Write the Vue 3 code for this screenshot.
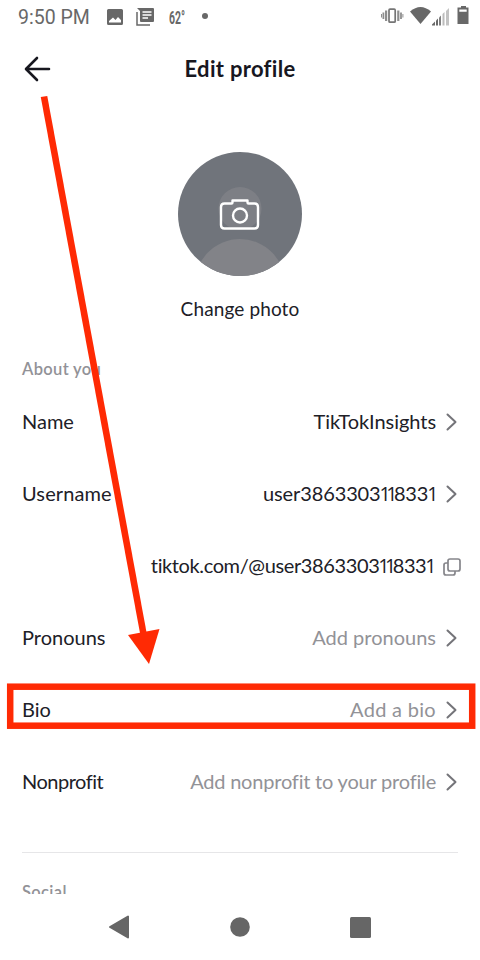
<script setup>
const rows = [
  { key: 'name', label: 'Name', value: 'TikTokInsights', icon: 'chevron' },
  { key: 'username', label: 'Username', value: 'user3863303118331', icon: 'chevron' },
  { key: 'link', label: '', value: 'tiktok.com/@user3863303118331', icon: 'copy' },
  { key: 'pronouns', label: 'Pronouns', value: 'Add pronouns', icon: 'chevron', muted: true },
  { key: 'bio', label: 'Bio', value: 'Add a bio', icon: 'chevron', muted: true },
  { key: 'nonprofit', label: 'Nonprofit', value: 'Add nonprofit to your profile', icon: 'chevron', muted: true },
]
// Narrow ones get their own run so that the digits are spaced proportionally.
const runs = (text) => text.split(/(1)/).filter(Boolean)
</script>

<template>
  <div class="screen">
    <div class="status">
      <span class="time">9:50 PM</span>
      <svg class="picture" width="16" height="16" viewBox="0 0 16 16">
        <path fill="#686868" fill-rule="evenodd" d="M1.500 0h13Q16 0 16 1.500v13Q16 16 14.500 16h-13Q0 16 0 14.500v-13Q0 0 1.500 0ZM2 13.500h12V11l-3-3-2.500 3L6 8.500 2 12Z" />
      </svg>
      <svg class="news" width="18" height="18" viewBox="0 0 18 18">
        <path fill="#686868" fill-rule="evenodd" d="M1 0h16Q18 0 18 1v12Q18 14 17 14H5Q4 14 4 13V3ZM6.500 3.300v1.500h9V3.300ZM6.500 6.300v1.500h9V6.300ZM6.500 9.300v1.500h5.500V9.300Z" />
        <path d="M1 4v13h13" fill="none" stroke="#686868" stroke-width="1.500" />
      </svg>
      <span class="temp">62°</span>
      <i class="dot"></i>
      <svg class="signals" width="90" height="22" viewBox="0 0 90 22">
        <g fill="#686868">
          <rect x="8" y="3.200" width="6.200" height="13" rx="1" fill="none" stroke="#757575" stroke-width="1.700" />
          <path d="M4 4.500h2.200v10.500H4ZM1.500 6.500h1.800v6.500H1.500ZM0 8h1v3.500H0ZM16.200 4.500h2.200v10.500h-2.200ZM19.100 6.500h1.800v6.500h-1.800ZM21.400 8h1v3.500h-1Z" opacity=".75" />
          <path d="M29 5.500Q39.500-3.500 50 5.500L39.500 18Z" />
          <path d="M51 19.500v-1l3-3v4Z" />
          <path d="M55 19.500v-5l2-2v7Z" />
          <path d="M58 19.500v-8l2-2v10Z" opacity=".85" />
          <path d="M61.500 19.500V8l2-2v13.500Z" opacity=".45" />
          <path d="M65 19.500V5l3-3v17.500Z" opacity=".4" />
          <path fill-rule="evenodd" d="M80 0h5v1.500h2.500V18h-11V1.500H80ZM78.300 3.500v2.200h7.400V3.500Z" />
        </g>
      </svg>
    </div>

    <header class="header">
      <svg class="back" width="27" height="26" viewBox="0 0 27 26">
        <path d="M13 2 2 13l11 11M2.500 13H25" fill="none" stroke="#17171f" stroke-width="2.600" stroke-linecap="round" stroke-linejoin="round" />
      </svg>
      <h1 class="title">Edit profile</h1>
    </header>

    <section class="photo">
      <svg width="124" height="124" viewBox="0 0 124 124">
        <defs>
          <clipPath id="avatar"><circle cx="62" cy="62" r="62" /></clipPath>
        </defs>
        <g clip-path="url(#avatar)">
          <rect width="124" height="124" fill="#70747b" />
          <circle cx="62" cy="56.500" r="21.500" fill="#7d7f85" />
          <circle cx="62" cy="132" r="45" fill="#828388" />
        </g>
        <g fill="none" stroke="#fff" stroke-width="2.400" stroke-linejoin="round">
          <path d="M46.500 51.500H53.500Q54.500 51.500 54.500 50.500V48.500H69.500V50.500Q69.500 51.500 70.500 51.500H76.500Q80 51.500 80 55V73Q80 76.500 76.500 76.500H46.500Q43 76.500 43 73V55Q43 51.500 46.500 51.500Z" />
          <circle cx="62" cy="63.500" r="7" />
        </g>
      </svg>
      <span class="change">Change photo</span>
    </section>

    <main class="content">
      <h2 class="section about">About you</h2>
      <div v-for="row in rows" :key="row.key" class="row" :class="row.key">
        <span class="label">{{ row.label }}</span>
        <span class="value" :class="{ muted: row.muted }"><span v-for="(run, i) in runs(row.value)" :key="i" :class="{ one: run === '1' }">{{ run }}</span></span>
        <svg v-if="row.icon === 'chevron'" class="chevron" width="11" height="18" viewBox="0 0 11 18">
          <path d="m1.500 1.500 8 7.500-8 7.500" fill="none" stroke="#747479" stroke-width="2" stroke-linecap="round" stroke-linejoin="round" />
        </svg>
        <svg v-else class="copy" width="18" height="18" viewBox="0 0 18 18">
          <rect x="5" y="1" width="12" height="12" rx="2" fill="none" stroke="#85858a" stroke-width="1.700" />
          <path d="M5 5H3Q1 5 1 7v8q0 2 2 2h7q2 0 2-2v-2" fill="none" stroke="#85858a" stroke-width="1.700" />
        </svg>
      </div>
      <hr class="divider" />
      <h2 class="section social">Social</h2>
    </main>

    <nav class="nav">
      <svg class="nav-back" width="22" height="24" viewBox="0 0 22 24"><path d="M2 12 20 1.500v21Z" fill="#666" stroke="#666" stroke-width="2" stroke-linejoin="round" /></svg>
      <svg width="20" height="20" viewBox="0 0 20 20"><circle cx="10" cy="10" r="9.800" fill="#666" /></svg>
      <svg width="21" height="21" viewBox="0 0 21 21"><rect width="21" height="21" rx="1.500" fill="#666" /></svg>
    </nav>

    <svg class="annotation" width="480" height="960" viewBox="0 0 480 960">
      <path d="M44 96.500 143.500 634" stroke="#ff2a04" stroke-width="6.600" />
      <path d="m128 635 31.500-6L149 664Z" fill="#ff2a04" />
      <rect x="10.200" y="686.700" width="462" height="39" fill="none" stroke="#ff2a04" stroke-width="6.500" />
    </svg>
  </div>
</template>

<style>
body { background: #fff; }
</style>

<style scoped>
.screen {
  position: relative;
  width: 480px;
  height: 960px;
  overflow: hidden;
  display: flex;
  flex-direction: column;
  background: #fff;
  color: #202027;
  font-family: Lato, sans-serif;
}
.status {
  height: 36px;
  box-sizing: border-box;
  padding-left: 18px;
  display: flex;
  align-items: flex-start;
  color: #686868;
}
.time { width: 89px; font: 19.5px/36px Roboto, sans-serif; white-space: nowrap; }
.picture { margin-top: 9px; }
.news { margin: 8px 0 0 13px; }
.temp { width: 18px; margin-left: 15px; font: bold 17.5px/36px Roboto, sans-serif; transform: scaleX(.6); transform-origin: left; }
.dot { width: 6px; height: 6px; margin: 13px 0 0 15px; border-radius: 50%; background: #686868; }
.signals { margin: 6px 0 0 auto; padding-right: 9px; }
.header { height: 66px; display: flex; align-items: center; }
.back { width: 27px; margin-left: 24px; }
.title { flex: 1; margin: 0 51px 0 0; text-align: center; font-size: 22px; font-weight: 700; line-height: 30px; letter-spacing: .3px; color: #17171f; }
.photo { height: 250px; padding-top: 50px; box-sizing: border-box; display: flex; flex-direction: column; align-items: center; }
.change { margin-top: 20px; font-size: 19px; line-height: 26px; letter-spacing: .12px; }
.content { height: 542px; overflow: hidden; padding: 0 22px; box-sizing: border-box; }
.section { margin: 0; font-size: 16.5px; line-height: 24px; font-weight: 600; color: #929297; letter-spacing: .35px; }
.about { padding: 5px 0 5px; }
.row { height: 72px; display: flex; align-items: center; font-size: 20px; white-space: nowrap; }
.label, .value { padding-bottom: 2px; }
.value { margin-left: auto; }
.one { margin-left: -1px; font-family: "Open Sans", sans-serif; font-size: 19.5px; line-height: 20px; letter-spacing: -3.500px; }
.muted { color: #929297; }
.name .value { letter-spacing: -.05px; }
.username .label { letter-spacing: .12px; }
.username .value { padding-right: 1px; letter-spacing: -.12px; }
.link .value { padding-right: 2px; letter-spacing: -.38px; }
.bio .value { letter-spacing: .3px; }
.nonprofit .label { letter-spacing: -.5px; }
.nonprofit .value { letter-spacing: -.2px; }
.chevron { margin: 0 1px 0 10px; }
.copy { margin: 1px -3px 0 8px; }
.divider { height: 1px; margin: 34px 0 27px; border: 0; background: #e6e6e8; }
.nav { height: 66px; display: grid; grid-template-columns: repeat(3, 120px); justify-content: center; align-items: center; justify-items: center; }
.nav-back { margin-right: 2px; }
.annotation { position: absolute; left: 0; top: 0; pointer-events: none; }
</style>
